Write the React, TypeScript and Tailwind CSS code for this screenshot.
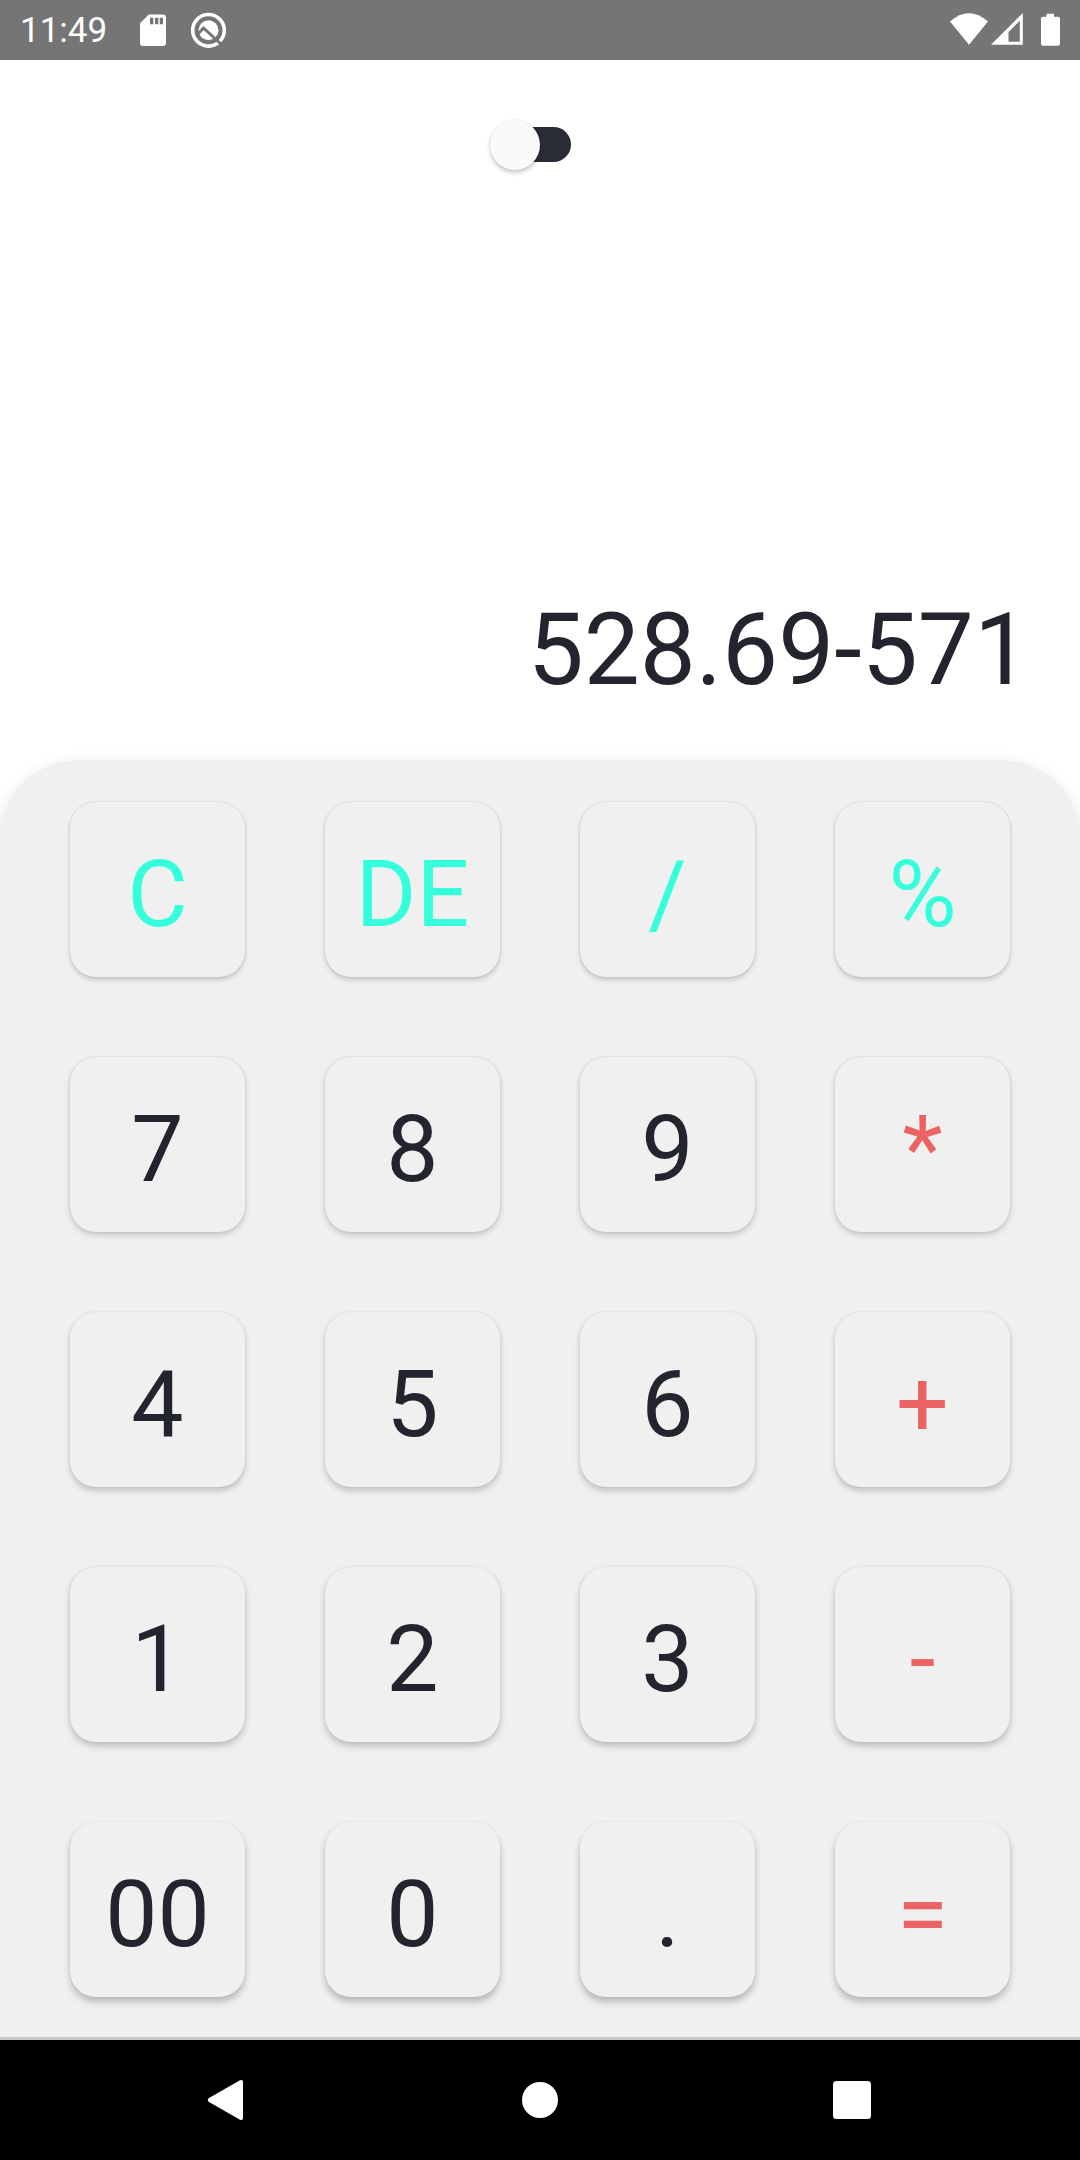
import React from "react";

type Tone = "aqua" | "dark" | "red";
type Key = { label: string; tone: Tone };

const toneClass: Record<Tone, string> = {
  aqua: "text-[#36ffdb]",
  dark: "text-[#22252d]",
  red: "text-[#eb6363]",
};

const rows: { shadow: string; keys: Key[] }[] = [
  {
    shadow: "shadow-[0_0_2px_rgba(0,0,0,0.14),0_3px_5px_rgba(0,0,0,0.17)]",
    keys: [
      { label: "C", tone: "aqua" },
      { label: "DE", tone: "aqua" },
      { label: "/", tone: "aqua" },
      { label: "%", tone: "aqua" },
    ],
  },
  {
    shadow: "shadow-[0_0_2px_rgba(0,0,0,0.12),0_3px_6px_rgba(0,0,0,0.18)]",
    keys: [
      { label: "7", tone: "dark" },
      { label: "8", tone: "dark" },
      { label: "9", tone: "dark" },
      { label: "*", tone: "red" },
    ],
  },
  {
    shadow: "shadow-[0_0_2px_rgba(0,0,0,0.10),0_4px_6px_rgba(0,0,0,0.19)]",
    keys: [
      { label: "4", tone: "dark" },
      { label: "5", tone: "dark" },
      { label: "6", tone: "dark" },
      { label: "+", tone: "red" },
    ],
  },
  {
    shadow: "shadow-[0_0_2px_rgba(0,0,0,0.09),0_4px_7px_rgba(0,0,0,0.21)]",
    keys: [
      { label: "1", tone: "dark" },
      { label: "2", tone: "dark" },
      { label: "3", tone: "dark" },
      { label: "-", tone: "red" },
    ],
  },
  {
    shadow: "shadow-[0_0_2px_rgba(0,0,0,0.08),0_5px_7px_rgba(0,0,0,0.23)]",
    keys: [
      { label: "00", tone: "dark" },
      { label: "0", tone: "dark" },
      { label: ".", tone: "dark" },
      { label: "=", tone: "red" },
    ],
  },
];

function StatusBar() {
  return (
    <header className="flex h-[60px] shrink-0 items-center justify-between bg-[#757575] pl-5 text-white">
      <div className="flex h-full items-center">
        <span className="w-[120px] pt-0.5 text-[35px] leading-[60px]">11:49</span>
        <svg width="26" height="60" viewBox="140 0 26 60" fill="currentColor">
          <path
            fillRule="evenodd"
            d="M148.8 14.5H163Q166 14.5 166 17.5V43Q166 46 163 46H143Q140 46 140 43V23.2ZM150 17.7V24.3H153.3V17.7ZM155 17.7V24.3H158.3V17.7ZM159.7 17.7V24.3H163V17.7Z"
          />
        </svg>
        <svg className="ml-6" width="37" height="60" viewBox="190 0 37 60" fill="none">
          <circle cx="208.5" cy="30.3" r="15.800" stroke="currentColor" strokeWidth="3.6" />
          <circle cx="208.5" cy="30.3" r="10" fill="currentColor" />
          <path d="M197.500 34.500L203.500 28L222 45" stroke="#757575" strokeWidth="3" />
        </svg>
      </div>
      <svg width="150" height="60" viewBox="930 0 150 60" fill="currentColor">
        <path d="M950 21.5Q969 5 988 21.5L969 44.7Z" />
        <path fillRule="evenodd" d="M1022.8 13V44.7H991ZM1019.8 20.8L1008.5 32V41.7H1019.8Z" />
        <path d="M1046.5 13.7H1054V16.7H1058Q1060 16.7 1060 18.7V43.7Q1060 45.7 1058 45.7H1043Q1041 45.7 1041 43.7V18.7Q1041 16.7 1043 16.7H1046.5Z" />
      </svg>
    </header>
  );
}

function ThemeSwitch() {
  return (
    <div className="ml-[490px] mt-[59px] flex h-[51px] w-[81px] items-center">
      <div className="z-10 size-[50px] shrink-0 rounded-full bg-[#fafafa] shadow-[0_0_2px_rgba(0,0,0,0.12),0_3px_4px_rgba(0,0,0,0.2)]" />
      <div className="-ml-10 h-[35px] w-[71px] shrink-0 rounded-full bg-[#282c35]" />
    </div>
  );
}

function NavBar() {
  return (
    <nav className="h-[120px] shrink-0 bg-black">
      <svg width="1080" height="120" viewBox="0 0 1080 120" fill="#fff">
        <path d="M209 58L240 40.3Q243 39.3 243 42V78Q243 80.7 240 79.7L209 62Q206.500 60 209 58Z" />
        <circle cx="540" cy="60" r="18" />
        <rect x="833" y="41" width="38" height="38" rx="3.500" />
      </svg>
    </nav>
  );
}

export default function App() {
  return (
    <div className="flex h-[2160px] w-[1080px] flex-col overflow-hidden bg-white font-[Roboto,sans-serif]">
      <StatusBar />
      <section className="flex h-[700px] shrink-0 flex-col justify-between">
        <ThemeSwitch />
        <output className="mb-[50px] mr-[50px] block text-right text-[99.75px] leading-[120px] text-[#22252d]">
          528.69-571
        </output>
      </section>
      <main className="z-10 flex h-[1277px] shrink-0 flex-col gap-20 rounded-t-[79px] bg-[#f0f0f0] px-[70px] pt-[42px] shadow-[0_8px_20px_rgba(0,0,0,0.14)]">
        {rows.map((row) => (
          <div key={row.keys[0].label} className="flex gap-20">
            {row.keys.map((key) => (
              <button
                key={key.label}
                className={`flex size-[175px] items-center justify-center rounded-[26px] bg-[#f0f0f0] pt-2.5 text-[93px] leading-none ${toneClass[key.tone]} ${row.shadow}`}
              >
                {key.label}
              </button>
            ))}
          </div>
        ))}
      </main>
      <div className="z-10 h-[3px] shrink-0 bg-[#c8c8c8]" />
      <NavBar />
    </div>
  );
}
